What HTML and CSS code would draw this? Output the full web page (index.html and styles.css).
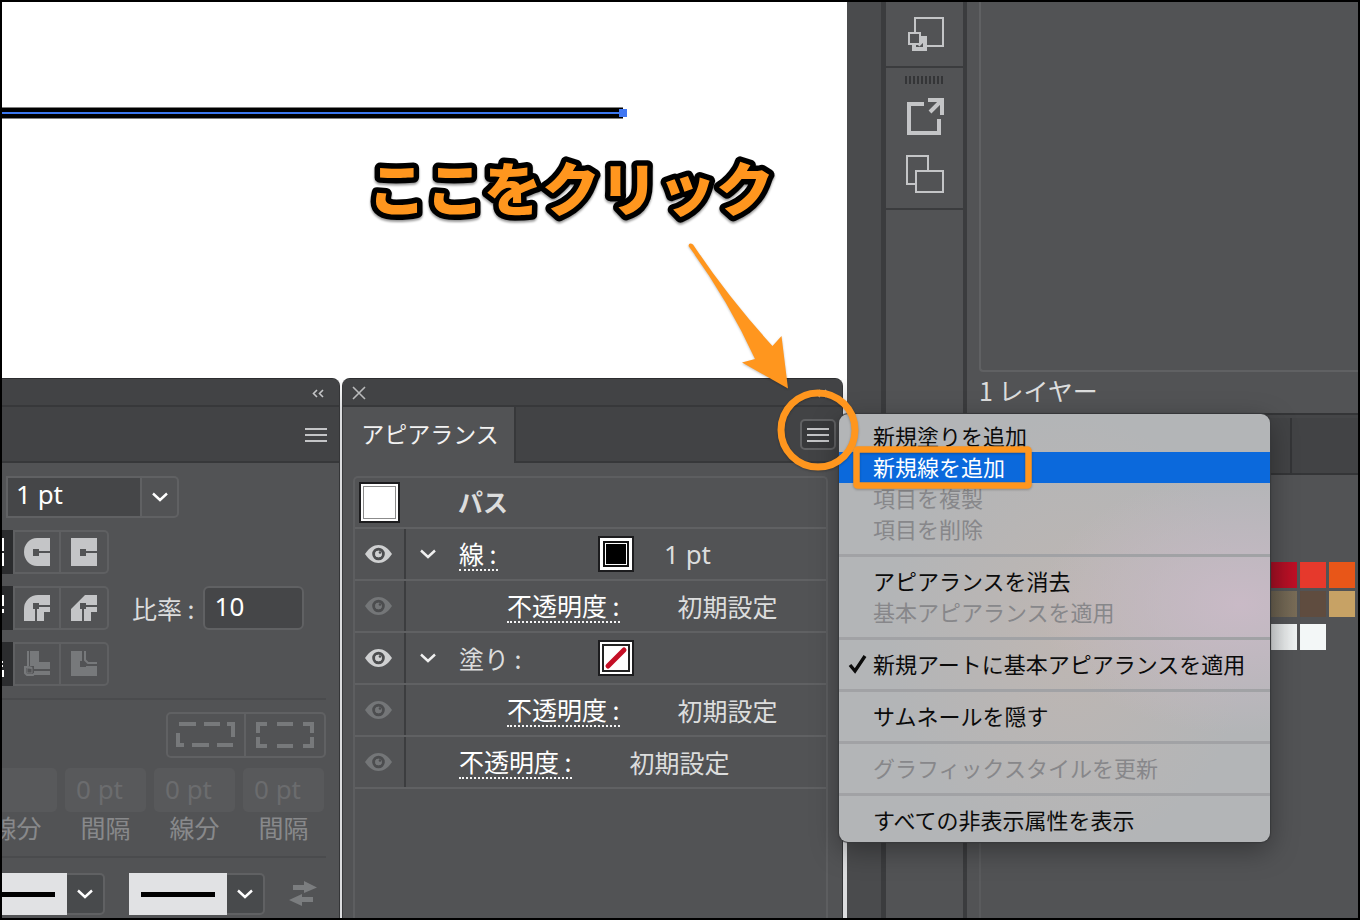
FILE: index.html
```html
<!DOCTYPE html>
<html lang="ja">
<head>
<meta charset="utf-8">
<title>アピアランス</title>
<link rel="stylesheet" href="styles.css">
</head>
<body>
<svg class="defs" width="0" height="0" aria-hidden="true">
  <symbol id="eye" viewBox="0 0 27 18"><path fill="currentColor" d="M0 9C4 3 8.500 0 13.500 0S23 3 27 9c-4 6-8.500 9-13.500 9S4 15 0 9z"/><circle class="eye-ring" cx="13.500" cy="9" r="4.800"/><circle fill="currentColor" cx="13.500" cy="9" r="3.200"/><circle class="eye-dot" cx="15" cy="7.500" r="1.300"/></symbol>
  <symbol id="chev" viewBox="0 0 18 10"><path d="M2 1.500l7 6.500 7-6.500" fill="none" stroke="currentColor" stroke-width="2.400"/></symbol>
  <symbol id="lines" viewBox="0 0 22 16"><path d="M0 2h22M0 8h22M0 14h22" fill="none" stroke="currentColor" stroke-width="2"/></symbol>
  <symbol id="dbl" viewBox="0 0 12 9"><path d="M5 1L1.500 4.500 5 8M11 1L7.500 4.500 11 8" fill="none" stroke="currentColor" stroke-width="1.600"/></symbol>
</svg>
<div class="app">
  <main class="canvas">
    <div class="artboard">
      <svg class="stroke-path" width="626" height="12" aria-hidden="true"><path d="M0 6h621" stroke="#000" stroke-width="11"/><path d="M0 6h621" stroke="#3c78f0" stroke-width="2"/><rect x="617" y="2" width="8" height="8" fill="#4077f2"/></svg>
    </div>
    <div class="panels">
      <section class="panel stroke-panel">
        <div class="titlebar end"><button class="bare" aria-label="折りたたむ"><svg width="12" height="9"><use href="#dbl"/></svg></button></div>
        <div class="tabs end"><button class="bare" aria-label="パネルメニュー"><svg width="22" height="16"><use href="#lines"/></svg></button></div>
        <div class="stroke-body">
          <div class="weight"><input type="text" value="1 pt" aria-label="線幅"><button aria-label="線幅の候補"><svg width="18" height="10"><use href="#chev"/></svg></button></div>
          <div class="option-row">
            <div class="segs">
              <button class="on" aria-label="バット"><svg width="26" height="28"><path fill="none" stroke="#fff" stroke-width="2" d="M1 1h24v11H12v4h13v11H1z"/></svg></button>
              <button aria-label="丸型"><svg width="26" height="28"><path fill="#c4c5c7" d="M26 0v13H15v-2H9v7h6v-3h11v13H13a13 14 0 010-28z"/></svg></button>
              <button aria-label="突出"><svg width="26" height="28"><path fill="#c4c5c7" d="M0 0h26v13H15v-2H9v7h6v-3h11v13H0z"/></svg></button>
            </div>
          </div>
          <div class="option-row">
            <div class="segs">
              <button class="on" aria-label="マイター"><svg width="26" height="26"><path fill="none" stroke="#fff" stroke-width="2" d="M1 1h24v9H12M25 14v3H16v8H1V1"/></svg></button>
              <button aria-label="ラウンド"><svg width="26" height="26"><path fill="#c4c5c7" d="M14 0h12v10H15V8H9v6h2v12H0V14A14 14 0 0114 0zM15 12h11v5h-6v9h-7V14h2z"/></svg></button>
              <button aria-label="ベベル"><svg width="26" height="26"><path fill="#c4c5c7" d="M14 0h12v10H15V8H9v6h2v12H0V14zM15 12h11v5h-6v9h-7V14h2z"/></svg></button>
            </div>
            <label for="ratio">比率 :</label><input class="ratio" id="ratio" type="text" value="10">
          </div>
          <div class="option-row">
            <div class="segs dim">
              <button class="on" aria-label="中央"><svg width="26" height="26"><path fill="none" stroke="#fff" stroke-width="2" d="M1 1h10v10h14M1 15h24M1 20h24v5H1z"/></svg></button>
              <button aria-label="内側"><svg width="26" height="26"><path fill="#77797b" d="M6 0h9v11h11v7H10v-3H6z"/><path fill="none" stroke="#77797b" stroke-width="2" d="M4 0v15M10 21h16M4 16H1v6l2 2h6l1-1h16M4 16l4 1"/><rect x="3" y="17" width="5" height="5" fill="none" stroke="#77797b" stroke-width="1"/></svg></button>
              <button aria-label="外側"><svg width="26" height="26"><path fill="#77797b" d="M0 0h11v10H9v6h6v-1h11v10H0z"/><path fill="none" stroke="#77797b" stroke-width="2" d="M14 0v9l3 3h9"/></svg></button>
            </div>
          </div>
          <hr>
          <div class="dash-modes">
            <button aria-label="線分と間隔の正確な長さを保持"><svg width="60" height="28"><path fill="none" stroke="#77797b" stroke-width="4" d="M3 3h17M28 3h16M51 3h6v13M2 12v12h6M16 24h17M41 24h16"/></svg></button>
            <button aria-label="コーナーに破線の先端を整列"><svg width="60" height="28"><path fill="none" stroke="#77797b" stroke-width="4" d="M3 12V3h9M22 3h16M48 3h9v9M3 16v9h9M22 25h16M48 25h9v-9"/></svg></button>
          </div>
          <div class="dashes">
            <div><input id="d1" disabled><label for="d1">線分</label></div>
            <div><input id="d2" value="0 pt" disabled><label for="d2">間隔</label></div>
            <div><input id="d3" value="0 pt" disabled><label for="d3">線分</label></div>
            <div><input id="d4" value="0 pt" disabled><label for="d4">間隔</label></div>
          </div>
          <hr>
          <div class="arrows">
            <div class="arrow-pick"><span></span><button aria-label="矢印の始点"><svg width="18" height="10"><use href="#chev"/></svg></button></div>
            <div class="arrow-pick"><span></span><button aria-label="矢印の終点"><svg width="18" height="10"><use href="#chev"/></svg></button></div>
            <button class="bare swap" aria-label="入れ替え"><svg width="28" height="26"><path fill="#7b7d7f" d="M4 4h11V0l13 6.500L15 12V9H4zM24 16H13v-3L0 19l13 6v-4h11z"/></svg></button>
          </div>
        </div>
      </section>

      <section class="panel look-panel">
        <div class="titlebar"><button class="bare" aria-label="閉じる"><svg width="14" height="14"><path d="M1 1l12 12M13 1L1 13" stroke="#b9babb" stroke-width="1.600"/></svg></button><button class="bare" aria-label="折りたたむ"><svg width="12" height="9"><use href="#dbl"/></svg></button></div>
        <div class="tabs"><button class="tab">アピアランス</button><button class="menu-button" aria-label="パネルメニュー"><svg width="22" height="16"><use href="#lines"/></svg></button></div>
        <div class="look-body">
          <div class="list">
            <div class="object"><span class="thumb"></span><strong>パス</strong></div>
            <div class="row"><button class="eye lit" aria-label="表示"><svg width="27" height="18"><use href="#eye"/></svg></button><button class="twist" aria-label="開閉"><svg width="18" height="10"><use href="#chev"/></svg></button><button class="link">線 :</button><span class="swatch black"></span><span class="value num">1 pt</span></div>
            <div class="row child"><button class="eye" aria-label="表示"><svg width="27" height="18"><use href="#eye"/></svg></button><button class="link">不透明度 :</button><span class="value">初期設定</span></div>
            <div class="row"><button class="eye lit" aria-label="表示"><svg width="27" height="18"><use href="#eye"/></svg></button><button class="twist" aria-label="開閉"><svg width="18" height="10"><use href="#chev"/></svg></button><span class="value name">塗り :</span><span class="swatch none"><svg width="24" height="24"><path d="M4 20L20 4" stroke="#c40f26" stroke-width="5" stroke-linecap="round"/></svg></span></div>
            <div class="row child"><button class="eye" aria-label="表示"><svg width="27" height="18"><use href="#eye"/></svg></button><button class="link">不透明度 :</button><span class="value">初期設定</span></div>
            <div class="row root"><button class="eye" aria-label="表示"><svg width="27" height="18"><use href="#eye"/></svg></button><button class="link">不透明度 :</button><span class="value">初期設定</span></div>
          </div>
        </div>
      </section>
    </div>
  </main>

  <nav class="dock">
    <div class="dock-group first"><button class="bare" aria-label="アセット"><svg width="38" height="36"><path fill="none" stroke="#c4c5c7" stroke-width="2" d="M9 17V2h28v28H20"/><path fill="none" stroke="#c4c5c7" stroke-width="4" d="M15 22h4v11H8v-5M12 29l6-6"/><rect x="3" y="17" width="11" height="11" fill="#525355" stroke="#c4c5c7" stroke-width="2"/></svg></button></div>
    <div class="dock-group">
      <svg class="grip" width="40" height="8"><path d="M0 4h40" stroke="#343537" stroke-width="8" stroke-dasharray="2 2"/></svg>
      <button class="bare" aria-label="アセットの書き出し"><svg width="40" height="40"><path fill="none" stroke="#c4c5c7" stroke-width="4" d="M19 7H4v29h30V22M23 3h14v15M36 4L25 15"/></svg></button>
      <button class="bare" aria-label="アートボード"><svg width="40" height="40"><path fill="none" stroke="#c4c5c7" stroke-width="2" d="M10 30H2V2h21v14M11 17h27v21H11z"/></svg></button>
    </div>
  </nav>

  <aside class="side">
    <section class="layers"><div class="layer-list"></div><p>1 レイヤー</p></section>
    <section class="swatches">
      <div class="swatch-tabs"><span></span></div>
      <div class="swatch-body">
        <div class="colors"><i class="c1"></i><i class="c2"></i><i class="c3"></i><i class="c4"></i><i class="c5"></i><i class="c6"></i></div>
        <div class="colors groups"><i class="c7"></i><i class="c8"></i></div>
      </div>
    </section>
  </aside>

  <div class="menu" role="menu">
    <button role="menuitem">新規塗りを追加</button>
    <button role="menuitem" class="active">新規線を追加</button>
    <button role="menuitem" disabled>項目を複製</button>
    <button role="menuitem" disabled>項目を削除</button>
    <hr>
    <button role="menuitem">アピアランスを消去</button>
    <button role="menuitem" disabled>基本アピアランスを適用</button>
    <hr>
    <button role="menuitemcheckbox" aria-checked="true"><svg class="tick" width="20" height="20"><path d="M2 11l5 6L17 2" fill="none" stroke="#0b0b0b" stroke-width="3.400"/></svg>新規アートに基本アピアランスを適用</button>
    <hr>
    <button role="menuitem">サムネールを隠す</button>
    <hr>
    <button role="menuitem" disabled>グラフィックスタイルを更新</button>
    <hr>
    <button role="menuitem">すべての非表示属性を表示</button>
  </div>

  <svg class="callout" width="430" height="90"><text x="14" y="60">ここをクリック</text></svg>
  <svg class="marks" width="360" height="260" viewBox="680 236 360 260" aria-hidden="true">
    <path fill="#ff961e" d="M688.500 246Q689 242 693 244.500Q728 297 772.500 346L781.500 336L788 388.500L742 362.500L755 359Q728 300 688.500 246z"/>
    <circle cx="818" cy="430" r="37" fill="none" stroke="#ff961e" stroke-width="7"/>
    <rect x="856.500" y="449.500" width="172" height="36" rx="1" fill="none" stroke="#ff961e" stroke-width="6.500"/>
  </svg>
</div>
</body>
</html>
```
FILE: styles.css
```css
* { box-sizing: border-box; }
body {
  margin: 0;
  font: 25px/32px "Noto Sans CJK JP", sans-serif;
  color: #dcdddd;
}
button, input { font: inherit; color: inherit; margin: 0; }
input, .num { font-family: "Noto Sans", "Noto Sans CJK JP", sans-serif; font-size: 26px; }
button { background: none; border: 0; padding: 0; }
svg { display: block; flex: none; }
p { margin: 0; }
hr { border: 0; margin: 0; }
.defs { position: absolute; }
.app {
  position: relative;
  display: flex;
  height: 100vh;
  border: 2px solid #000;
  background: #525355;
  overflow: hidden;
}
.canvas {
  flex: 1;
  min-width: 0;
  display: flex;
  flex-direction: column;
  background: #fff;
  overflow: hidden;
}
.artboard { flex: 1; padding-top: 105px; }
.panels { display: flex; gap: 2px; padding-right: 4px; background: linear-gradient(#fff, #dcdddf 30px); }
.panel {
  background: #525355;
  border-radius: 8px 8px 0 0;
  border-top: 1px solid #2c2d2f;
  overflow: hidden;
}
.stroke-panel { border-top-left-radius: 0; }
.titlebar, .tabs {
  display: flex;
  align-items: center;
  justify-content: space-between;
  background: #424345;
  border-bottom: 2px solid #37383a;
  color: #c4c5c7;
}
.titlebar { height: 28px; padding: 2px 15px 0 9px; }
.tabs { height: 56px; padding-top: 1px; }
.titlebar.end, .tabs.end { justify-content: flex-end; }
.tabs.end { padding-right: 12px; }

.stroke-panel { width: 338px; border-right: 1px solid #343537; }
.stroke-body { padding: 13px 13px 3px 0; }
.weight { display: flex; width: 177px; height: 42px; padding-left: 4px; }
.weight input {
  width: 136px;
  padding: 0 0 6px 8px;
  background: #454648;
  border: 2px solid #606163;
  color: #fff;
}
.weight button, .arrow-pick button {
  width: 38px;
  display: grid;
  place-items: center;
  color: #fff;
  border: 2px solid #606163;
  border-left: 0;
  border-radius: 0 5px 5px 0;
}
.option-row { display: flex; align-items: center; margin-top: 12px; height: 44px; }
.segs { display: flex; justify-content: flex-end; width: 107px; height: 44px; }
.segs button {
  flex: none;
  width: 48px;
  display: grid;
  place-items: center;
  border: 2px solid #5f6062;
}
.segs button:last-child { border-left: 0; border-radius: 0 5px 5px 0; }
.segs .on { width: 44px; background: #2b2c2e; border-color: #2b2c2e; }
.option-row label { margin-left: 23px; }
.ratio {
  width: 101px;
  height: 44px;
  margin-left: 8px;
  padding: 0 0 4px 10px;
  background: #454648;
  border: 2px solid #606163;
  border-radius: 6px;
}
.stroke-body .ratio { color: #fff; }
.stroke-body hr { height: 2px; margin-top: 12px; background: #4a4b4d; }
.dash-modes { display: flex; justify-content: flex-end; margin-top: 12px; }
.dash-modes button {
  width: 80px;
  height: 46px;
  display: grid;
  place-items: center;
  border: 2px solid #606163;
  border-radius: 5px 0 0 5px;
}
.dash-modes button + button { border-left: 0; border-radius: 0 5px 5px 0; }
.dashes { display: flex; justify-content: flex-end; gap: 8px; margin-top: 10px; padding-right: 2px; color: #88898b; }
.dashes div { flex: none; width: 81px; text-align: center; }
.dashes input {
  display: block;
  width: 81px;
  height: 44px;
  padding: 0 0 2px 11px;
  border: 0;
  border-radius: 5px;
  background: #58595b;
  color: #6b6c6e;
}
.dashes label { display: block; line-height: 30px; padding-bottom: 2px; }
.arrows { display: flex; align-items: center; justify-content: flex-end; gap: 24px; padding: 15px 9px 0 0; }
.arrow-pick { display: flex; flex: none; height: 42px; }
.arrow-pick span { display: grid; place-items: center; width: 98px; background: #e1e2e4; }
.arrow-pick span::before { content: ""; width: 74px; height: 5px; background: #000; }
.arrow-pick button { background: #484a4c; }

.look-panel { flex: 1; display: flex; flex-direction: column; border-left: 1px solid #39393b; border-right: 1px solid #343537; }
.tab {
  align-self: stretch;
  width: 173px;
  margin: -1px 0 -2px;
  padding: 0 0 5px 3px;
  background: #525355;
  border-right: 2px solid #37383a;
  color: #f2f2f2;
  font-size: 23px;
}
.menu-button {
  width: 36px;
  height: 31px;
  margin-right: 6px;
  display: grid;
  place-items: center;
  background: #38393b;
  border: 2px solid #606163;
  border-radius: 5px;
  color: #c4c5c7;
}
.look-body { flex: 1; display: flex; padding: 13px 14px 0 10px; }
.list { flex: 1; border: 2px solid #5d5e60; border-bottom: 0; border-radius: 5px 5px 0 0; }
.object { display: flex; align-items: center; height: 51px; padding-left: 4px; border-bottom: 2px solid #606163; }
.thumb {
  width: 41px;
  height: 41px;
  border: 2px solid #1c1c1e;
  background: #fff;
  box-shadow: inset 0 0 0 2px #fff, inset 0 0 0 3px #8b8b8b;
}
.object strong { margin-left: 58px; padding-bottom: 3px; }
.row { display: flex; align-items: center; height: 52px; border-bottom: 2px solid #606163; }
.eye {
  width: 51px;
  height: 50px;
  padding-right: 3px;
  display: grid;
  place-items: center;
  border-right: 2px solid #3c3d3f;
  color: #747678;
}
.eye.lit { color: #cfd0d1; }
.eye-ring { fill: none; stroke: #4c4d4f; stroke-width: 3px; }
.eye-dot { fill: #4c4d4f; }
.twist { margin-left: 13px; color: #f0f0f0; }
.link { color: #fff; line-height: 31px; border-bottom: 2px dotted #f5f5f5; }
.twist + * { width: 39px; margin-left: 22px; white-space: nowrap; text-align: left; }
.child .link { margin-left: 101px; }
.root .link { margin-left: 53px; }
.row .link + .value { margin-left: 58px; }
.value { padding-bottom: 1px; }
.swatch {
  display: grid;
  place-items: center;
  width: 36px;
  height: 36px;
  margin-left: 100px;
  border: 2px solid #1c1c1e;
  background: #fff;
}
.swatch.black { background: #000; box-shadow: inset 0 0 0 3px #fff, inset 0 0 0 5px #111, inset 0 0 0 6px #fff; }
.swatch.none { box-shadow: inset 0 0 0 2px #fff, inset 0 0 0 4px #222; }
.row .swatch + .value { margin-left: 30px; }

.dock {
  display: flex;
  flex-direction: column;
  width: 120px;
  padding-left: 34px;
  background: linear-gradient(90deg, #4a4b4d 34px, #525355 34px);
}
.dock::after { content: ""; flex: 1; border: solid #3b3c3e; border-width: 0 4px 0 5px; }
.dock-group {
  display: flex;
  flex-direction: column;
  align-items: center;
  gap: 17px;
  padding: 8px 0 14px;
  border: solid #3b3c3e;
  border-width: 0 4px 2px 5px;
}
.dock-group.first { padding: 14px 0 14px; }
.dock-group .grip + .bare { margin-top: -4px; }

.side { width: 391px; display: flex; flex-direction: column; }
.layers { height: 411px; display: flex; flex-direction: column; padding-left: 12px; }
.layer-list { flex: 1; border: solid #606163; border-width: 0 0 2px 2px; border-radius: 0 0 0 4px; }
.layers p { padding: 2px 0 7px; }
.swatches { flex: 1; display: flex; flex-direction: column; border-top: 2px solid #343537; }
.swatch-tabs { height: 60px; border-top: 3px solid #454648; border-bottom: 2px solid #343537; background: #424345; display: flex; }
.swatch-tabs span { width: 325px; border-right: 2px solid #343537; }
.swatch-body { flex: 1; margin-left: 12px; padding: 87px 3px 0 0; border-left: 2px solid #5a5b5d; }
.colors { display: grid; grid-template-columns: repeat(3, 26px); gap: 3px; justify-content: end; }
.colors i { height: 26px; }
.groups { margin-top: 7px; }
.c1 { background: linear-gradient(90deg, #a30f24, #c00f25); }
.c2 { background: #e6392c; }
.c3 { background: #e85618; }
.c4 { background: linear-gradient(90deg, #685f4e, #796c57); }
.c5 { background: #5f4c3f; }
.c6 { background: #c7a265; }
.c7 { background: linear-gradient(90deg, #d8dbdc, #f0f3f3); }
.c8 { background: #f3f7f7; }

.menu {
  position: absolute;
  left: 837px;
  top: 412px;
  width: 431px;
  padding: 7px 0 6px;
  border-radius: 9px;
  background:
    radial-gradient(ellipse 200px 130px at 400px 190px, #c9bac6, #c9bac600),
    radial-gradient(ellipse 180px 220px at 230px 220px, #beb6b2, #beb6b200),
    #b3b5b7;
  box-shadow: 0 0 1px 1px #38393b, 0 8px 28px rgba(0, 0, 0, .35);
  color: #0b0b0b;
  font-size: 22px;
}
.menu button {
  position: relative;
  display: block;
  width: 100%;
  height: 31px;
  padding: 0 0 3px 34px;
  line-height: 28px;
  text-align: left;
  white-space: nowrap;
}
.menu button:disabled { color: #87878a; }
.menu .active { background: #0b69dc; color: #fff; }
.menu hr { height: 3px; margin: 9px 0; background: #a1a2a5; }
.tick { position: absolute; left: 9px; top: 5px; }

.callout {
  position: absolute;
  left: 352px;
  top: 149px;
  overflow: visible;
  filter: drop-shadow(0 2px 1px rgba(0, 0, 0, .4));
}
.callout text {
  font-size: 58px;
  font-weight: 900;
  fill: #ff961e;
  stroke: #000;
  stroke-width: 11px;
  stroke-linejoin: round;
  paint-order: stroke fill;
}
.marks {
  position: absolute;
  left: 678px;
  top: 234px;
  pointer-events: none;
  filter: drop-shadow(0 1px 1px rgba(0, 0, 0, .25));
}
```
